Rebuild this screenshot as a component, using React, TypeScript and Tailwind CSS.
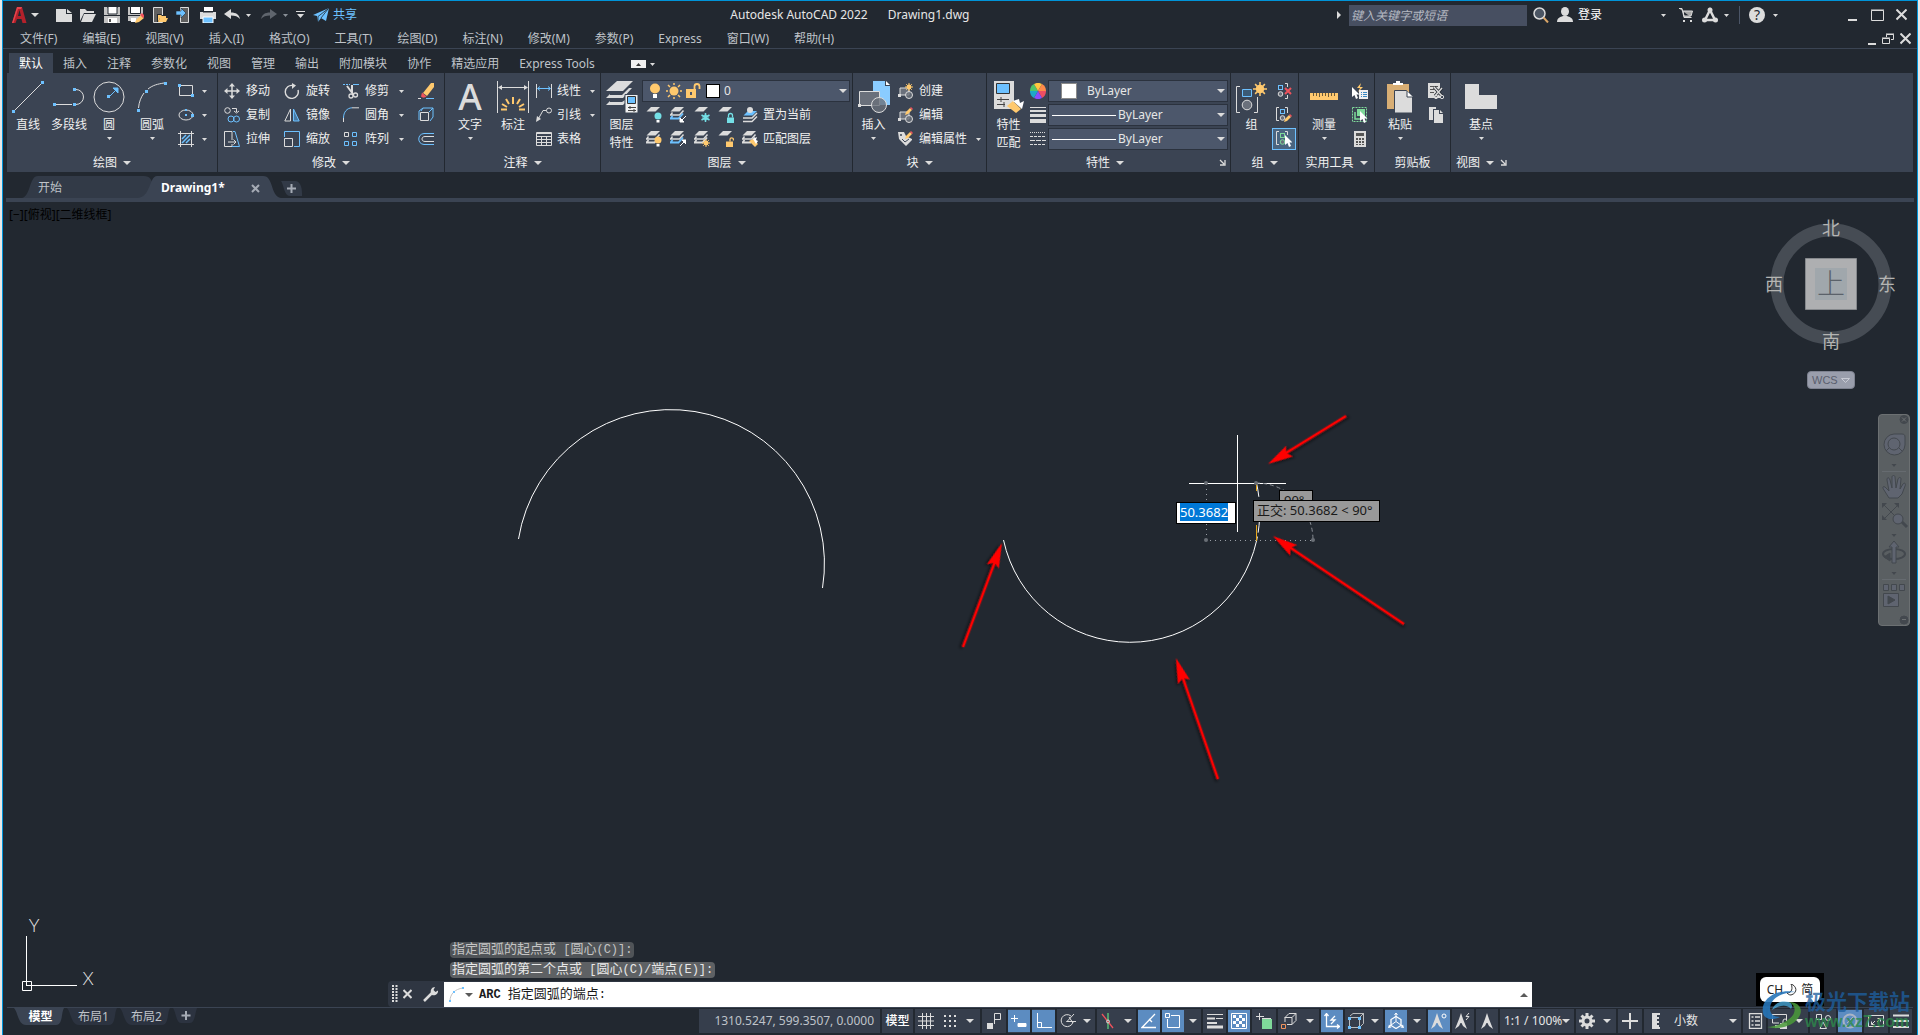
import { FC, ReactNode } from "react";

const W = "#dcdcdc";
const B = "#6dc1ff";
const Y = "#ffc96e";
const G = "#7fd99a";
const C = "#74dfe6";
const R = "#f0525c";

type IcoProps = { w?: number; h?: number; children: ReactNode };

const Ico: FC<IcoProps> = ({ w = 16, h = 16, children }) => (
  <svg
    width={w}
    height={h}
    viewBox={`0 0 ${w} ${h}`}
    fill="none"
    className="shrink-0"
    aria-hidden="true"
  >
    {children}
  </svg>
);

// small triangle used by every drop-down
const Arrow: FC<{ big?: boolean; color?: string }> = ({ big, color = W }) => (
  <svg
    width={big ? 8 : 5}
    height={big ? 4 : 3}
    viewBox="0 0 8 4"
    preserveAspectRatio="none"
    className="shrink-0"
    aria-hidden="true"
  >
    <path d="M0 0h8L4 4z" fill={color} />
  </svg>
);

/* ---------- shared icon parts ---------- */

const Sheet: FC<{ x?: number; y?: number; c?: string }> = ({ x = 0, y = 0, c = W }) => (
  <path d={`M${x + 5} ${y}h9l-4.500 4.500h-9z`} fill={c} />
);

const Sheets: FC<{ c?: string }> = ({ c = W }) => (
  <>
    <Sheet y={0} />
    <path d="M2.500 5.500L.5 8h9l4-4.500" stroke={W} strokeWidth="1.500" />
    <path d="M2.500 9L.5 11.500h8l4.500-5" stroke={c} strokeWidth="1.800" />
  </>
);

const Bulb: FC<{ c: string }> = ({ c }) => (
  <>
    <circle cx="12" cy="9" r="3.500" fill={c} />
    <path d="M10.500 13h3v2.500h-3z" fill="#fff" />
  </>
);

const Star: FC<{ x: number; y: number; r: number }> = ({ x, y, r }) => (
  <g stroke={Y} strokeWidth={r > 5 ? 1.5 : 1}>
    <circle cx={x} cy={y} r={r * 0.6} fill={Y} stroke="none" />
    <path
      d={`M${x} ${y - r}V${y + r}M${x - r} ${y}H${x + r}M${x - r * 0.7} ${y - r * 0.7}L${x + r * 0.7} ${y + r * 0.7}M${x + r * 0.7} ${y - r * 0.7}L${x - r * 0.7} ${y + r * 0.7}`}
    />
  </g>
);

const Pencil: FC<{ x: number; y: number }> = ({ x, y }) => (
  <g transform={`translate(${x} ${y})`}>
    <path d="M0 8l1-3 4-4 2 2-4 4z" fill={Y} />
    <path d="M5 1l1-1 2 2-1 1z" fill={R} />
  </g>
);

const Lock: FC<{ c: string; open?: boolean }> = ({ c, open }) => (
  <>
    <path d={open ? "M8 10.500h7V16H8z" : "M9 10.500h7V16H9z"} fill={c} />
    <path d={open ? "M12 10.500V8.500a1.700 1.700 0 0 1 3.400 0v1" : "M10.500 10.500V8.500a2 2 0 0 1 4 0v2"} stroke={c} strokeWidth="1.300" />
  </>
);

const Block: FC = () => (
  <>
    <path d="M2 5h9v7H2z" fill="#6a707b" stroke={W} />
    <circle cx="11" cy="12" r="3.500" fill="#6a707b" fillOpacity=".8" stroke={W} />
    <path d="M0 11h3v3H0z" fill={W} />
  </>
);

const Cursor: FC<{ x: number; y: number }> = ({ x, y }) => (
  <path d={`M${x} ${y}v10l2.500-2 1.500 4 2-1-1.500-3.500h3z`} fill="#fff" />
);

const GroupMark: FC<{ c?: string }> = ({ c = B }) => (
  <>
    <rect x="4.500" y="2.500" width="4" height="4" stroke={c} />
    <circle cx="6.500" cy="11" r="2.300" fill="#6a707b" stroke={c === B ? W : c} />
  </>
);

/* ---------- ribbon building blocks ---------- */

type BigProps = {
  width: string;
  lines: string[];
  icon: ReactNode;
  arrow?: boolean;
};

const Big: FC<BigProps> = ({ width, lines, icon, arrow }) => (
  <button className={`${width} h-18 flex flex-col items-center shrink-0`}>
    <span className="h-9 w-9 flex items-center justify-center">{icon}</span>
    {lines.map((line) => (
      <span key={line} className="leading-[17px] mt-px whitespace-nowrap">
        {line}
      </span>
    ))}
    {arrow && (
      <span className="mt-1">
        <Arrow />
      </span>
    )}
  </button>
);

type SmallProps = {
  label?: string;
  title?: string;
  icon: ReactNode;
  arrow?: boolean;
  gap?: string;
};

const Small: FC<SmallProps> = ({ label, title, icon, arrow, gap = "gap-1.5" }) => (
  <button aria-label={label || title} className={`h-6 flex items-center ${gap} whitespace-nowrap`}>
    {icon}
    {label && <span>{label}</span>}
    {arrow && (
      <span className={label ? "ml-1" : "ml-0.5"}>
        <Arrow />
      </span>
    )}
  </button>
);

type PanelProps = {
  width: string;
  title: string;
  noArrow?: boolean;
  launcher?: boolean;
  children: ReactNode;
};

const Launcher: FC = () => (
  <Ico w={7} h={7}>
    <path d="M1 1l4 4M6 1v5H1" stroke={W} strokeWidth="1.300" />
  </Ico>
);

const Panel: FC<PanelProps> = ({ width, title, noArrow, launcher, children }) => (
  <section className={`${width} shrink-0 pt-1.5 border-r border-[#222830] flex flex-col`}>
    <div className="h-18 flex">{children}</div>
    <div className="flex-1 pt-0.5 flex items-center px-1">
      <button className="flex-1 flex items-center justify-center gap-1.5">
        {title}
        {!noArrow && <Arrow big />}
      </button>
      {launcher && <Launcher />}
    </div>
  </section>
);

const Combo: FC<{ label: string; value: string; children?: ReactNode; box: string }> = ({
  label,
  value,
  children,
  box,
}) => (
  <div
    className={`${box} relative h-[22px] flex items-center bg-[#4c576b] border border-[#2b323e]`}
  >
    {children}
    <select
      aria-label={label}
      defaultValue={value}
      className="flex-1 min-w-0 h-full appearance-none bg-transparent outline-none text-[#e6e6e6]"
    >
      <option>{value}</option>
    </select>
    <span className="absolute right-0.5 top-2 flex pointer-events-none">
      <Arrow big />
    </span>
  </div>
);

/* ---------- title, menu and tab rows ---------- */

const menus = [
  "文件(F)", "编辑(E)", "视图(V)", "插入(I)", "格式(O)", "工具(T)", "绘图(D)",
  "标注(N)", "修改(M)", "参数(P)", "Express", "窗口(W)", "帮助(H)",
];

const tabs = [
  "默认", "插入", "注释", "参数化", "视图", "管理", "输出",
  "附加模块", "协作", "精选应用", "Express Tools",
];

const quickTools: { name: string; icon: ReactNode }[] = [
  {
    name: "新建",
    icon: <path d="M0 2h10v5h6v8H0zM11 2l5 4h-5z" fill={W} />,
  },
  {
    name: "打开",
    icon: (
      <>
        <path d="M0 14V2h5l2 2h7v2H4z" fill={W} />
        <path d="M4 7h12l-4 8H1z" fill={W} />
      </>
    ),
  },
  {
    name: "保存",
    icon: (
      <>
        <path d="M0 0h16v16H0z" fill="#c4c4c4" />
        <path d="M4 0h9v7H4z" fill="#fff" />
        <path d="M3 0h1v7h9V0h1M0 8.500h16" stroke="#222830" />
        <path d="M4 11h9v5H4z" fill="#fff" />
        <path d="M5 12h2v3H5z" fill="#555" />
      </>
    ),
  },
  {
    name: "另存为",
    icon: (
      <>
        <path d="M0 0h15v8l-6 6H0z" fill="#c4c4c4" />
        <path d="M3 0h9v6H3z" fill="#fff" />
        <path d="M2.500 0v6.500h10V0M0 8.500h12" stroke="#222830" />
        <path d="M3 11h5v4H3z" fill="#fff" />
        <path d="M7 16l1-3 5-5 3 3-5 4z" fill={Y} />
        <path d="M12 8l2-2 3 3-2 2z" fill={R} />
      </>
    ),
  },
  {
    name: "从 Web 打开",
    icon: (
      <>
        <path d="M1.500.5h9v15h-9z" fill="#606060" stroke={W} />
        <path d="M5 7h4l1 1h5v7H5z" fill="#222830" />
        <path d="M6 8h3l1 1h4v2H8l-2 4z" fill={Y} />
        <path d="M8 11h8l-2 4H6z" fill={Y} />
      </>
    ),
  },
  {
    name: "保存到 Web",
    icon: (
      <>
        <path d="M4.500.5h8v15h-8z" fill="#606060" stroke={W} />
        <path d="M0 4h5V1l5 5-5 5V8H0z" fill={B} stroke="#222830" strokeWidth=".6" />
      </>
    ),
  },
  {
    name: "打印",
    icon: (
      <>
        <path d="M4 0h9v4H4z" fill="#fff" />
        <path d="M0 5h16v7H0z" fill={W} />
        <path d="M3 5h10" stroke="#222830" />
        <path d="M3 10h10v6H3z" fill={B} stroke="#fff" />
      </>
    ),
  },
];

const TitleBar: FC = () => (
  <header className="h-7 flex items-center">
    <div className="w-[38%] flex items-center pl-2">
      <button aria-label="应用程序菜单" className="flex items-center gap-1 w-[45px]">
        <Ico w={16} h={18}>
          <path d="M1 17L6 1h5l4.500 16h-4L10.500 13H6L4.500 17z" fill="#b3212b" />
          <path d="M7 10l1.500-6 1.500 6z" fill="#222830" />
          <path d="M6 1h5l-1 2H7L2.500 17H1z" fill="#e5454d" />
        </Ico>
        <Arrow big />
      </button>
      <div className="flex gap-2">
        {quickTools.map((tool) => (
          <button key={tool.name} aria-label={tool.name}>
            <Ico>{tool.icon}</Ico>
          </button>
        ))}
      </div>
      <button aria-label="放弃" className="ml-2 flex items-center gap-1.5">
        <Ico>
          <path d="M0 7l7-5v3.500c5 0 8 2 9 6.500-2-2.500-5-3.500-9-3.500V12z" fill={W} />
        </Ico>
        <Arrow />
      </button>
      <button aria-label="重做" className="ml-2.5 flex items-center gap-1.5">
        <Ico>
          <path d="M16 7L9 2v3.500c-5 0-8 2-9 6.500 2-2.500 5-3.500 9-3.500V12z" fill="#5f656d" />
        </Ico>
        <Arrow color="#8a9098" />
      </button>
      <button aria-label="自定义快速访问工具栏" className="ml-2">
        <Ico w={9} h={8}>
          <path d="M0 .5h9" stroke={W} />
          <path d="M1 3h7L4.500 7z" fill={W} />
        </Ico>
      </button>
      <button className="ml-2 flex items-center gap-1 text-[#6dc1ff]">
        <Ico>
          <path d="M0 8L16 1l-3 13-5-3-3 4-1-6z" fill={B} />
          <path d="M16 1L5 9.500V15M8 11l7-9" stroke="#222830" strokeWidth=".8" />
        </Ico>
        共享
      </button>
    </div>
    <h1 className="flex-1 flex gap-5 text-[#e6e6e6] whitespace-nowrap">
      <span>Autodesk AutoCAD 2022</span>
      <span>Drawing1.dwg</span>
    </h1>
    <div className="flex items-center pr-2.5">
      <svg width="4" height="8" viewBox="0 0 4 8" aria-hidden="true">
        <path d="M0 0l4 4-4 4z" fill={W} />
      </svg>
      <input
        aria-label="搜索"
        placeholder="键入关键字或短语"
        className="ml-2 w-[178px] h-[21px] px-0.5 bg-[#474f61] italic outline-none placeholder:text-[#b5b9c1]"
      />
      <button aria-label="搜索" className="ml-1.5">
        <Ico>
          <circle cx="6.500" cy="6.500" r="5.500" fill="#4b5563" stroke={W} strokeWidth="1.500" />
          <path d="M10.500 10.500l4.500 5" stroke="#d9a567" strokeWidth="2" />
        </Ico>
      </button>
      <button className="ml-2 flex items-center gap-[5px] text-white">
        <Ico>
          <ellipse cx="8" cy="4.500" rx="4" ry="4.500" fill={W} />
          <path d="M0 15c0-4 3-5 6-6h4c3 1 6 2 6 6z" fill={W} />
        </Ico>
        登录
        <span className="ml-[54px]">
          <Arrow />
        </span>
      </button>
      <button aria-label="应用商店" className="ml-3">
        <Ico>
          <path d="M1 1.500h3l2 9h7.500M5 4h9.500L13 9H6z" fill="#a8a8a8" stroke={W} />
          <path d="M5 13h2v2H5zM12 13h2v2h-2z" fill={W} />
        </Ico>
      </button>
      <button aria-label="Autodesk 应用" className="ml-2 flex items-center gap-1.5">
        <Ico>
          <path d="M8 3L3 13h10z" stroke={W} strokeWidth="2.500" />
          <circle cx="8" cy="3" r="2.500" fill={W} />
          <circle cx="2.500" cy="13" r="2.500" fill={W} />
          <circle cx="13.500" cy="13" r="2.500" fill={W} />
        </Ico>
        <Arrow />
      </button>
      <span className="ml-2.5 h-[18px] border-l border-[#4b5567]" />
      <button aria-label="帮助" className="ml-[9px] flex items-center gap-2">
        <span className="size-4 rounded-full bg-[#dcdcdc] text-[#222830] text-sm leading-4 text-center">
          ?
        </span>
        <Arrow />
      </button>
      <button aria-label="最小化" className="ml-[70px]">
        <Ico w={9} h={12}>
          <path d="M0 11h9" stroke={W} strokeWidth="2" />
        </Ico>
      </button>
      <button aria-label="最大化" className="ml-3.5">
        <Ico w={13} h={12}>
          <path d="M.5 1.500h12v10H.5zM0 1h13" stroke={W} />
        </Ico>
      </button>
      <button aria-label="关闭" className="ml-3">
        <Ico w={11} h={12}>
          <path d="M.5.5l10 10M10.500.5l-10 10" stroke={W} strokeWidth="2" />
        </Ico>
      </button>
    </div>
  </header>
);

const MenuBar: FC = () => (
  <nav className="h-5 flex items-center gap-[25px] pl-[17px] pr-1.5 border-b border-[#3b4453] text-[#bfc3c9]">
    {menus.map((menu) => (
      <a key={menu} href="#" className="whitespace-nowrap">
        {menu}
      </a>
    ))}
    <span className="ml-auto flex items-center gap-1.5">
      <button aria-label="最小化图形">
        <Ico w={8} h={12}>
          <path d="M0 11h8" stroke={W} strokeWidth="2" />
        </Ico>
      </button>
      <button aria-label="还原图形">
        <Ico w={12} h={12}>
          <path d="M4.500 4V1.500h7v5H9M.5 5.500h7v5h-7zM4 1h8M0 5h8" stroke={W} />
        </Ico>
      </button>
      <button aria-label="关闭图形">
        <Ico w={11} h={12}>
          <path d="M.5.5l10 10M10.500.5l-10 10" stroke={W} strokeWidth="2" />
        </Ico>
      </button>
    </span>
  </nav>
);

const RibbonTabs: FC = () => (
  <nav className="h-6 flex items-end pl-1.5 text-[#bfc3c9]">
    {tabs.map((tab, i) => (
      <button
        key={tab}
        className={`h-5 pt-0.5 px-2.5 whitespace-nowrap ${i === 0 ? "bg-[#3b4453] text-white" : ""}`}
      >
        {tab}
      </button>
    ))}
    <button aria-label="最小化功能区" className="ml-[26px] h-5 pt-0.5 flex items-center gap-1">
      <Ico w={15} h={8}>
        <path d="M0 0h15v8H0z" fill="#f0f0f0" />
        <path d="M5 6h5L7.500 3z" fill="#333" />
      </Ico>
      <Arrow />
    </button>
  </nav>
);

/* ---------- ribbon panels ---------- */

const DrawPanel: FC = () => (
  <Panel width="w-[211px]" title="绘图">
    <Big
      width="w-[42px]"
      lines={["直线"]}
      icon={
        <Ico w={32} h={32}>
          <path d="M3 29L29 3" stroke={W} />
          <path d="M0 29h3v3H0zM29 0h3v3h-3z" fill={B} />
        </Ico>
      }
    />
    <Big
      width="w-10"
      lines={["多段线"]}
      icon={
        <Ico w={32} h={32}>
          <path d="M3 23.500h16M23 8.500a7 7 0 0 1 0 15" stroke={W} />
          <path d="M0 22h3v3H0zM20 22h3v3h-3zM20 7h3v3h-3z" fill={B} />
        </Ico>
      }
    />
    <Big
      width="w-10"
      lines={["圆"]}
      arrow
      icon={
        <Ico w={32} h={32}>
          <circle cx="16" cy="16" r="15" stroke={W} />
          <path d="M17 15l7-7M20 7h5v5z" stroke={B} fill={B} />
          <path d="M14 14h3v3h-3z" fill={B} />
        </Ico>
      }
    />
    <Big
      width="w-[46px]"
      lines={["圆弧"]}
      arrow
      icon={
        <Ico w={32} h={32}>
          <path d="M2.500 27C3 21 5 16 8 12M12 8c5-4 10-5 16-6" stroke={W} />
          <path d="M1 28h3v3H1zM9 9h3v3H9zM28 1h3v3h-3z" fill={B} />
        </Ico>
      }
    />
    <div className="ml-[3px]">
      <Small
        title="矩形"
        arrow
        icon={
          <Ico>
            <path d="M1.500 2.500h13v10h-13z" stroke={W} />
            <path d="M0 1h3v3H0zM13 11h3v3h-3z" fill={B} />
          </Ico>
        }
      />
      <Small
        title="椭圆"
        arrow
        icon={
          <Ico>
            <ellipse cx="8" cy="8" rx="7" ry="5" stroke={W} />
            <path d="M7 7h2v2H7zM7 2h2v2H7zM13 7h3v3h-3z" fill={B} />
          </Ico>
        }
      />
      <Small
        title="图案填充"
        arrow
        icon={
          <Ico>
            <path d="M0 2.500h16M0 13.500h16M2.500 0v16M13.500 0v16" stroke={W} />
            <path d="M4 8l4-4M4 12l8-8M8 12l4-4" stroke={B} strokeWidth="1.500" />
          </Ico>
        }
      />
    </div>
  </Panel>
);

const ModifyPanel: FC = () => (
  <Panel width="w-[227px]" title="修改">
    <div className="w-[60px] ml-1.5">
      <Small
        label="移动"
        icon={
          <Ico>
            <path d="M8 2v12M2 8h12" stroke={W} strokeWidth="1.500" />
            <path d="M8 0l3 3.500H5zM8 16l3-3.500H5zM0 8l3.500-3v6zM16 8l-3.500-3v6z" fill={W} />
          </Ico>
        }
      />
      <Small
        label="复制"
        icon={
          <Ico>
            <circle cx="3.500" cy="3.500" r="2.800" stroke={W} />
            <circle cx="7" cy="12" r="3" stroke={B} />
            <circle cx="12.500" cy="12" r="3" stroke={B} />
            <path d="M8 1.500h4.500V5M10 4l2.500 2L15 4" stroke={W} />
          </Ico>
        }
      />
      <Small
        label="拉伸"
        icon={
          <Ico>
            <path d="M8 9V.5H.5v15H8V13M4 11h8M9.500 8.500L12 11l-2.500 2.500" stroke={W} />
            <path d="M9 .5h2l4.500 15H8" stroke={B} />
          </Ico>
        }
      />
    </div>
    <div className="w-[59px]">
      <Small
        label="旋转"
        icon={
          <Ico>
            <path d="M9 2.500A6.500 6.500 0 1 0 14 7" stroke={W} strokeWidth="1.400" />
            <path d="M8 0l4 2.500L8 6z" fill={W} />
          </Ico>
        }
      />
      <Small
        label="镜像"
        icon={
          <Ico>
            <path d="M6.500 2v12H.8z" stroke={W} />
            <path d="M9.500 2v12h5.700z" stroke={B} fill="#4a7ba5" />
          </Ico>
        }
      />
      <Small
        label="缩放"
        icon={
          <Ico>
            <path d="M.5 6V.5h15v15H10" stroke={B} />
            <path d="M.5 7.500h8v8h-8z" stroke={W} />
          </Ico>
        }
      />
    </div>
    <div className="w-[75px]">
      <Small
        label="修剪"
        arrow
        icon={
          <Ico>
            <path d="M0 1.500h7" stroke={B} strokeDasharray="2 1" />
            <path d="M10 1.500h6" stroke={B} />
            <path d="M4 3l6 8M9 2v8" stroke={W} strokeWidth="2" />
            <circle cx="8" cy="13" r="2" stroke={W} strokeWidth="1.300" />
            <circle cx="12.500" cy="12" r="2" stroke={W} strokeWidth="1.300" />
          </Ico>
        }
      />
      <Small
        label="圆角"
        arrow
        icon={
          <Ico>
            <path d="M.5 15v-4" stroke={W} />
            <path d="M.5 11C.5 5 4 1 9 .8" stroke={B} />
            <path d="M9 .8h7" stroke={W} />
          </Ico>
        }
      />
      <Small
        label="阵列"
        arrow
        icon={
          <Ico>
            <path d="M1.500 1.500h4v4h-4z" stroke={W} />
            <path d="M9.500 1.500h4v4h-4zM1.500 10.500h4v4h-4zM9.500 10.500h4v4h-4z" stroke={B} />
          </Ico>
        }
      />
    </div>
    <div>
      <Small
        title="删除"
        icon={
          <Ico>
            <path d="M5 10L13 0h3v4L9 13z" fill={Y} />
            <path d="M4 9.500l4.500 4c-2 1.500-4 1.500-5.500 0z" fill={R} />
            <path d="M0 15.500h3" stroke={W} />
            <path d="M8 15.500h8" stroke={B} />
          </Ico>
        }
      />
      <Small
        title="分解"
        icon={
          <Ico>
            <path d="M2.500 5.500h8v8h-8z" stroke={W} />
            <path d="M1 4l4-3h10v9l-3 4M5 1L3 4M15 1l-4 4M1 4v9" stroke={B} />
          </Ico>
        }
      />
      <Small
        title="偏移"
        icon={
          <Ico>
            <path d="M16 2.500H6C-1 3-1 13 6 13.500h10" stroke={B} />
            <path d="M16 5.500H7c-4 0-4 5 0 5h9" stroke={W} />
          </Ico>
        }
      />
    </div>
  </Panel>
);

const AnnotatePanel: FC = () => (
  <Panel width="w-[156px]" title="注释">
    <Big
      width="w-[50px]"
      lines={["文字"]}
      arrow
      icon={<span className="text-4xl leading-9 font-medium text-[#dcdcdc]">A</span>}
    />
    <Big
      width="w-9"
      lines={["标注"]}
      icon={
        <Ico w={32} h={32}>
          <path d="M.5 0v32M31.500 0v32M2 6.500h28" stroke={W} />
          <path d="M1 6.500l4-2.500v5zM31 6.500L27 4v5z" fill={W} />
          <path d="M16 16v7M9 18l3 5M23 18l-3 5M5 23l5 3M27 23l-5 3M4 28.500h6M22 28.500h6" stroke={Y} strokeWidth="2" />
        </Ico>
      }
    />
    <div className="ml-[5px]">
      <Small
        label="线性"
        arrow
        gap="gap-[5px]"
        icon={
          <Ico>
            <path d="M.5 1v14M15.500 1v14" stroke={W} />
            <path d="M2 5.500h12M4 3.500l-2.500 2L4 7.500M12 3.500l2.500 2-2.500 2" stroke={B} />
          </Ico>
        }
      />
      <Small
        label="引线"
        arrow
        gap="gap-[5px]"
        icon={
          <Ico>
            <circle cx="13" cy="3.500" r="2.500" stroke={W} />
            <path d="M10.500 3.500H7l-5 9" stroke={W} />
            <path d="M0 15l1-6 4 3z" fill={W} />
          </Ico>
        }
      />
      <Small
        label="表格"
        gap="gap-[5px]"
        icon={
          <Ico>
            <path d="M.5 1.500h15v13H.5zM.5 2.500h15M.5 5.500h15M.5 8.500h15M.5 11.500h15M5.500 5v9M10.500 5v9" stroke={W} />
          </Ico>
        }
      />
    </div>
  </Panel>
);

const layerTools: { name: string; icon: ReactNode }[][] = [
  [
    { name: "关闭图层", icon: <><Sheet /><Bulb c={C} /></> },
    { name: "隔离图层", icon: <><Sheets c={B} /><path d="M16 9l-5 5M10 11v4h4z" stroke="#fff" fill="#fff" /></> },
    {
      name: "冻结图层",
      icon: (
        <>
          <Sheet />
          <path d="M11.500 6v9M7.500 8l8 5M15.500 8l-8 5" stroke={C} strokeWidth="1.500" />
          <circle cx="11.500" cy="10.500" r="2.500" stroke={C} />
        </>
      ),
    },
    { name: "锁定图层", icon: <><Sheet /><Lock c={C} /></> },
  ],
  [
    { name: "打开所有图层", icon: <><Sheets /><Bulb c={Y} /></> },
    { name: "取消隔离图层", icon: <><Sheets c={B} /><path d="M10 15l5-5M12 9h4v4z" stroke="#fff" fill="#fff" /></> },
    { name: "解冻所有图层", icon: <><Sheets /><Star x={12} y={12} r={4} /></> },
    { name: "解锁图层", icon: <><Sheet /><Lock c={Y} open /></> },
  ],
];

const LayerPanel: FC = () => (
  <Panel width="w-[252px]" title="图层">
    <Big
      width="w-[41px]"
      lines={["图层", "特性"]}
      icon={
        <Ico w={32} h={32}>
          <path d="M11 0h16L17 10H0z" fill={W} />
          <path d="M4 13L0 17h17l9-10h-3l-7 7H4z" fill={W} />
          <path d="M4 20l-4 4h17l2-2v-3l-3 2H4z" fill={W} />
          <path d="M19 13.500h13V32H19z" fill="#f0f0f0" stroke="#3b4453" />
          <path d="M21.500 15.500h8v7h-8z" fill={B} stroke="#333" />
          <path d="M22 26.500h8M22 29.500h8M24 25v3M28 28v3" stroke="#444" />
        </Ico>
      }
    />
    <div className="flex flex-col">
      <div className="h-6 flex items-center">
        <Combo label="图层" value="0" box="w-[208px]">
          <span className="flex gap-[3px] ml-1 mr-1 items-center">
            <Ico>
              <circle cx="8" cy="5.500" r="5" fill={Y} />
              <path d="M6 11h4v4H6z" fill="#fff" />
            </Ico>
            <Ico>
              <circle cx="8" cy="8" r="4.500" fill={Y} />
              <path
                d="M8 0v2M8 14v2M0 8h2M14 8h2M2 2l2 2M12 12l2 2M14 2l-2 2M4 12l-2 2"
                stroke={Y}
                strokeWidth="1.500"
              />
            </Ico>
            <Ico>
              <path d="M1 6h10v9H1z" fill={Y} />
              <path d="M9.500 6V3.500a2.500 2.500 0 0 1 5 0V6" stroke={Y} strokeWidth="1.800" />
              <path d="M5 9h2v3H5z" fill="#4c576b" />
            </Ico>
            <span className="size-3.5 ml-0.5 bg-white border border-black" />
          </span>
        </Combo>
      </div>
      {layerTools.map((row, i) => (
        <div key={i} className="h-6 flex gap-2 pl-1">
          {row.map((tool) => (
            <Small key={tool.name} title={tool.name} icon={<Ico>{tool.icon}</Ico>} />
          ))}
          <Small
            label={i === 0 ? "置为当前" : "匹配图层"}
            gap="gap-[5px]"
            icon={
              i === 0 ? (
                <Ico>
                  <Sheet x={1} y={4} c={B} />
                  <circle cx="8" cy="3" r="3" fill={W} />
                  <path d="M1 11h9l5-5M1 14.500h9l5-5" stroke={W} strokeWidth="1.500" />
                </Ico>
              ) : (
                <Ico>
                  <Sheets />
                  <path d="M7 10l4-2 5 5-3 3z" fill={Y} />
                  <path d="M11 8l4-2-1 3 2 1-2 3z" fill="#fff" />
                </Ico>
              )
            }
          />
        </div>
      ))}
    </div>
  </Panel>
);

const BlockPanel: FC = () => (
  <Panel width="w-[134px]" title="块">
    <Big
      width="w-[41px]"
      lines={["插入"]}
      arrow
      icon={
        <Ico w={32} h={32}>
          <path d="M15 0h12v5h5v19H15z" fill="#8accff" />
          <path d="M28 0l4 4h-4z" fill="#fff" />
          <path d="M1.500 10.500h20v14h-20z" fill="#6a707b" stroke={W} />
          <circle cx="21" cy="24" r="7.500" fill="#6a707b" fillOpacity=".8" stroke={W} />
          <path d="M0 23h3v3H0z" fill={W} />
        </Ico>
      }
    />
    <div className="ml-1">
      <Small label="创建" gap="gap-[5px]" icon={<Ico><Block /><Star x={11} y={4} r={4} /></Ico>} />
      <Small label="编辑" gap="gap-[5px]" icon={<Ico><Block /><Pencil x={7} y={0} /></Ico>} />
      <Small
        label="编辑属性"
        arrow
        gap="gap-[5px]"
        icon={
          <Ico>
            <path d="M0 1h6l2 4 6 3v1l-6 6-7-7z" fill={W} />
            <circle cx="3" cy="4" r="1" fill="#3b4453" />
            <path d="M4 8l3 3 4-3" stroke="#3b4453" />
            <Pencil x={7} y={0} />
          </Ico>
        }
      />
    </div>
  </Panel>
);

const PropertiesPanel: FC = () => (
  <Panel width="w-[244px]" title="特性" launcher>
    <Big
      width="w-[43px]"
      lines={["特性", "匹配"]}
      icon={
        <Ico w={32} h={32}>
          <path d="M1 0h20v28H1z" fill={W} />
          <path d="M3.500 2.500h13v10h-13z" fill={B} stroke="#333" />
          <path d="M4 18.500h12M4 23.500h8M8 16v5M11 21v5" stroke="#444" />
          <path d="M14 25l6-5 8 8-5 4z" fill={Y} />
          <path d="M20 20l6-2 1 4 4-2-2 8z" fill="#fff" />
        </Ico>
      }
    />
    <div className="w-[18px]">
      <Small
        title="对象颜色"
        icon={
          <Ico>
            <path d="M8 8L0 8A8 8 0 0 1 4 1z" fill="#4fc46a" />
            <path d="M8 8L4 1A8 8 0 0 1 12 1z" fill="#ffc640" />
            <path d="M8 8L12 1A8 8 0 0 1 16 8z" fill="#ff8b4a" />
            <path d="M8 8L16 8A8 8 0 0 1 12 15z" fill="#ee4e62" />
            <path d="M8 8L12 15A8 8 0 0 1 4 15z" fill="#8a4dff" />
            <path d="M8 8L4 15A8 8 0 0 1 0 8z" fill="#1ea7c9" />
          </Ico>
        }
      />
      <Small
        title="线宽"
        icon={
          <Ico>
            <path d="M0 .5h16" stroke={W} />
            <path d="M0 4h16" stroke={W} strokeWidth="2" />
            <path d="M0 8.500h16" stroke={W} strokeWidth="3" />
            <path d="M0 14h16" stroke={W} strokeWidth="4" />
          </Ico>
        }
      />
      <Small
        title="线型"
        icon={
          <Ico>
            <path d="M0 1.500h16" stroke={W} strokeDasharray="1 1" />
            <path d="M0 5.500h16M0 13.500h16" stroke={W} strokeDasharray="3 1" />
            <path d="M0 9.500h16" stroke={W} strokeDasharray="5 1" />
          </Ico>
        }
      />
    </div>
    <div className="flex-1 pr-0.5">
      <div className="h-6 flex items-center">
        <Combo label="对象颜色" value="ByLayer" box="flex-1">
          <span className="size-4 ml-3 mr-2.5 bg-white border border-[#8a8a8a]" />
        </Combo>
      </div>
      <div className="h-6 flex items-center">
        <Combo label="线宽" value="ByLayer" box="flex-1">
          <span className="w-16 ml-[3px] mr-0.5 border-t border-white" />
        </Combo>
      </div>
      <div className="h-6 flex items-center">
        <Combo label="线型" value="ByLayer" box="flex-1">
          <span className="w-16 ml-[3px] mr-0.5 border-t border-white" />
        </Combo>
      </div>
    </div>
  </Panel>
);

const GroupPanel: FC = () => (
  <Panel width="w-[68px]" title="组">
    <Big
      width="w-[41px]"
      lines={["组"]}
      icon={
        <Ico w={32} h={32}>
          <path d="M4 5.500H.5v26H4M18 31.500h3.500V16" stroke={W} />
          <path d="M6.500 8.500h9v7h-9z" fill="#3b5a75" stroke={B} />
          <circle cx="11" cy="24" r="4.800" fill="#6a707b" stroke={W} />
          <Star x={24} y={8} r={7} />
        </Ico>
      }
    />
    <div className="flex flex-col items-center w-6">
      <Small
        title="解除编组"
        icon={
          <Ico>
            <g transform="translate(-2 0)"><GroupMark /></g>
            <path d="M9 .5h2.500V4M11.500 12v3.500H9" stroke={W} />
            <path d="M9 5l6 6M15 5l-6 6" stroke={R} strokeWidth="2" />
          </Ico>
        }
      />
      <Small
        title="组编辑"
        icon={
          <Ico>
            <path d="M3 .5H.5v13H3M9 .5h2.500V6" stroke={W} />
            <GroupMark />
            <Pencil x={8} y={7} />
          </Ico>
        }
      />
      <button
        aria-label="启用组选择"
        className="w-6 h-[22px] mt-px flex items-center justify-center bg-[#4a6580] border border-[#6dc1ff]"
      >
        <Ico>
          <path d="M3 .5H.5v13H3M9 .5h2.500V4" stroke={W} />
          <GroupMark c={G} />
          <Cursor x={9} y={4} />
        </Ico>
      </button>
    </div>
  </Panel>
);

const UtilityPanels: FC = () => (
  <>
    <Panel width="w-[76px]" title="实用工具">
      <Big
        width="w-[50px]"
        lines={["测量"]}
        arrow
        icon={
          <Ico w={32} h={32}>
            <path d="M2 12h28v7H2z" fill={Y} />
            <path d="M5.500 12v3M8.500 12v3M11.500 12v4M14.500 12v3M17.500 12v3M20.500 12v4M23.500 12v3M26.500 12v3" stroke="#6b5a3a" />
          </Ico>
        }
      />
      <div className="ml-[3px]">
        <Small
          title="快速选择"
          icon={
            <Ico>
              <Cursor x={0} y={4} />
              <path d="M9 0L5 5h3L6 9l5-5H8z" fill={Y} />
              <path d="M7 7h9v9H7z" fill="#f0f0f0" />
              <path d="M9 9.500h1M11 9.500h4M9 11.500h1M11 11.500h4M9 13.500h1M11 13.500h4" stroke="#3a8ac4" />
            </Ico>
          }
        />
        <Small
          title="全部选择"
          icon={
            <Ico>
              <path d="M.5.5h14v14H.5z" stroke={G} strokeDasharray="2 1" />
              <path d="M5 2h8v7H5z" fill={G} />
              <path d="M3 5v7h6" stroke={G} strokeWidth="1.500" />
              <Cursor x={8} y={4} />
            </Ico>
          }
        />
        <Small
          title="快速计算器"
          icon={
            <Ico>
              <path d="M2 0h12v16H2z" fill={W} />
              <path d="M4 2h8v3H4zM4 7h2v2H4zM7 7h2v2H7zM10 7h2v2h-2zM4 10h2v2H4zM7 10h2v2H7zM10 10h2v2h-2zM4 13h2v1H4zM7 13h2v1H7zM10 13h2v1h-2z" fill="#555" />
            </Ico>
          }
        />
      </div>
    </Panel>
    <Panel width="w-[76px]" title="剪贴板" noArrow>
      <Big
        width="w-[50px]"
        lines={["粘贴"]}
        arrow
        icon={
          <Ico w={32} h={32}>
            <path d="M3 3h22v25H3z" fill="#d8ae74" />
            <path d="M9 4V2h3V0h4v2h3v2z" fill="#fff" />
            <path d="M10.500 9.500h12l6 6V32h-18z" fill={W} stroke="#3b4453" />
            <path d="M23 10v6h6" fill="#fff" stroke="#3b4453" />
          </Ico>
        }
      />
      <div className="ml-[3px]">
        <Small
          title="剪切"
          icon={
            <Ico>
              <path d="M0 0h12v15H0z" fill={W} />
              <path d="M2 3.500h8M2 6.500h4M2 9.500h4" stroke="#555" />
              <path d="M6 4l8 9M14 5l-7 8" stroke="#222830" strokeWidth="3" />
              <path d="M6 4l8 9M14 5l-7 8" stroke={W} strokeWidth="1.500" />
              <circle cx="8" cy="14" r="1.700" stroke={W} />
              <circle cx="14" cy="14" r="1.700" stroke={W} />
            </Ico>
          }
        />
        <Small
          title="复制"
          icon={
            <Ico>
              <path d="M1 0h7v2H5v11H1z" fill={W} />
              <path d="M6 3h5v4h4v9H6zM12 3l3 3h-3z" fill={W} />
            </Ico>
          }
        />
      </div>
    </Panel>
    <section className="flex-1 pt-1.5 flex flex-col">
      <Big
        width="w-[60px]"
        lines={["基点"]}
        arrow
        icon={
          <Ico w={32} h={32}>
            <path d="M0 3h14v11h18v14H0z" fill={W} />
          </Ico>
        }
      />
      <div className="flex-1 pt-0.5 flex items-center gap-1.5 pl-[5px]">
        <button className="flex items-center gap-1.5">
          视图
          <Arrow big />
        </button>
        <Launcher />
      </div>
    </section>
  </>
);

const Ribbon: FC = () => (
  <div className="h-[99px] mx-1 flex overflow-hidden bg-[#3b4453] text-[#f0f0f0]">
    <DrawPanel />
    <ModifyPanel />
    <AnnotatePanel />
    <LayerPanel />
    <BlockPanel />
    <PropertiesPanel />
    <GroupPanel />
    <UtilityPanels />
  </div>
);

const FileTabs: FC = () => (
  <>
    <div className="h-[26px] flex items-end pl-[19px] text-[#bfc3c9]">
      <button className="relative w-[131px] h-[22px] pt-0.5 pl-4 text-left">
        <svg className="absolute inset-0" width="131" height="22" aria-hidden="true">
          <path d="M0 22C9 20 7 0 16 0h106c6 0 8 4 9 10v12z" fill="#323a47" />
        </svg>
        <span className="relative">开始</span>
      </button>
      <div className="relative -ml-4 w-[144px] h-[22px] pt-0.5 pl-6 flex items-center">
        <svg className="absolute inset-0" width="144" height="22" aria-hidden="true">
          <path d="M0 22C14 22 12 0 20 0h106c11 0 7 20 18 22z" fill="#3b4453" />
        </svg>
        <button className="relative font-bold text-white">Drawing1*</button>
        <button aria-label="关闭" className="relative ml-[26px]">
          <Ico w={9} h={9}>
            <path d="M1 1l7 7M8 1L1 8" stroke="#a5abb5" strokeWidth="2" />
          </Ico>
        </button>
      </div>
      <button aria-label="新图形" className="relative mb-0.5">
        <Ico w={22} h={16}>
          <path d="M0 1h14c5 0 7 6 7 12v3H9C3 16 3 5 0 1z" fill="#323a47" />
          <path d="M10.500 4v9M6 8.500h9" stroke="#a5abb5" strokeWidth="2" />
        </Ico>
      </button>
    </div>
    <div className="h-1 mx-[3px] bg-[#3b4453]" />
  </>
);

/* ---------- drawing area ---------- */

// marker arrow: a straight tail and a barbed head that points at (x, y)
const Pointer: FC<{ x: number; y: number; fromX: number; fromY: number }> = ({
  x,
  y,
  fromX,
  fromY,
}) => {
  const length = Math.hypot(fromX - x, fromY - y);
  const angle = (Math.atan2(fromY - y, fromX - x) * 180) / Math.PI;

  return (
    <g transform={`translate(${x} ${y}) rotate(${angle})`} filter="url(#shade)">
      <path d={`M20 0H${length}`} stroke="#ff0000" strokeWidth="2.500" />
      <path d="M0 0L25 -6L21 0L25 6.500z" fill="#ff0000" />
    </g>
  );
};

const Geometry: FC = () => (
  <svg className="absolute inset-0 w-full h-full" fill="none" aria-hidden="true">
    <defs>
      <filter id="shade" x="-20%" y="-100%" width="140%" height="300%">
        <feDropShadow dx="2" dy="2" stdDeviation="1.500" floodColor="#000" floodOpacity=".6" />
      </filter>
    </defs>
    <g transform="translate(-3 -202)">
      <g stroke="#fff">
        <path d="M518.500 539A153 153 0 0 1 822.500 588" />
        <path d="M1003.500 540A129.500 129.500 0 0 0 1256.500 541" />
        <path d="M1256.500 483Q1263 512 1256.500 541" strokeDasharray="14 4" />
        <path d="M1237.500 435V532M1189 483.500H1286" />
      </g>
      <path d="M1256.500 484v7M1256.500 525v16" stroke="#e8a81c" />
      <path d="M1206.500 484v56.500H1313" stroke="#9a9fa6" strokeDasharray="1 4" />
      <path d="M1256 483A57 57 0 0 1 1313 540" stroke="#8a8f96" strokeDasharray="4 3" />
      <g fill="#6a6f76">
        <circle cx="1206" cy="483" r="2" />
        <circle cx="1256" cy="483" r="2" />
        <circle cx="1206" cy="540" r="2" />
        <circle cx="1313" cy="540" r="2" />
      </g>
      <Pointer x={1268} y={464} fromX={1346} fromY={416} />
      <Pointer x={1273} y={536} fromX={1404} fromY={624} />
      <Pointer x={1002} y={543} fromX={963} fromY={647} />
      <Pointer x={1176} y={658} fromX={1218} fromY={779} />
    </g>
  </svg>
);

const DynamicInput: FC = () => (
  <div className="leading-[18px] text-[13px] text-[#1a1a1a]">
    <div className="absolute left-[1276px] top-[288px] w-[34px] h-5 px-1 border border-black bg-[#999]">
      90°
    </div>
    <div className="absolute left-[1250px] top-[298px] w-[127px] h-[22px] px-[3px] border border-black bg-[#999] whitespace-nowrap">
      正交: 50.3682 &lt; 90°
    </div>
    <div className="absolute left-[1173px] top-[300px] w-[60px] h-[22px] px-[3px] border border-black bg-white">
      <span className="block w-fit bg-[#0078d7] text-white">50.3682</span>
    </div>
  </div>
);

const ViewCube: FC = () => (
  <div className="absolute top-3 right-6 flex flex-col items-center gap-[13px] w-[124px]">
    <svg width="140" height="144" viewBox="0 0 140 144" className="shrink-0">
      <circle cx="70" cy="70" r="54" stroke="#464c54" strokeWidth="13" fill="none" />
      <path d="M44.500 44.500h51v51h-51z" fill="#aeafb1" stroke="#85888c" />
      <path d="M54 54h32v32H54z" fill="#a0a7ac" />
      <g textAnchor="middle" fontFamily='"Noto Sans CJK SC", sans-serif'>
        <text x="70" y="80" fontSize="28" fontWeight="300" fill="#5b626a">上</text>
        <g fontSize="18" fill="#b4b4b2">
          <text x="70" y="21">北</text>
          <text x="70" y="134">南</text>
          <text x="13" y="77">西</text>
          <text x="126" y="77">东</text>
        </g>
      </g>
    </svg>
    <button className="w-12 h-[18px] px-1 flex items-center justify-between rounded bg-[#9a9eac] border border-[#7e8290] text-[11px] text-[#5a5e6e] font-[Liberation_Sans]">
      WCS
      <Ico w={9} h={5}>
        <path d="M.5.5h8l-4 4z" stroke="#c8cad4" />
      </Ico>
    </button>
  </div>
);

const NavBar: FC = () => (
  <div className="absolute top-[212px] right-[7px] rounded border border-[#6c7072] bg-[#5a5f62]">
    <svg width="30" height="210" viewBox="0 0 30 210" fill="none" stroke="#43484e">
      <circle cx="25" cy="4.500" r="4" fill="#43484e" />
      <path d="M23 2.500l4 4M27 2.500l-4 4" stroke="#6c7072" />
      <path d="M15 19h8c2 0 3 1 3 3v8A10.500 10.500 0 1 1 15 19z" fill="#5f6470" />
      <circle cx="15" cy="29" r="6" />
      <path d="M10 33l-3 3M20 33l3 3" />
      <path d="M12.500 49h5L15 52zM12.500 119h5l-2.500 3zM12.500 157h5l-2.500 3z" fill="#43484e" stroke="none" />
      <path d="M3 56.500h24M3 164.500h24" stroke="#666b70" />
      <path
        d="M10 83L5 75c-2-3-1-4 1-3l4 4-2-11c0-3 2-3 3 0l2 8V62c0-2 3-2 3 0l1 11 2-9c1-2 3-2 3 0l-1 10 3-5c2-2 3 0 2 2l-3 8-4 4z"
        fill="#5f6470"
      />
      <path d="M5 90l14 14M19 90L5 104" />
      <path d="M3 88h5l-5 5zM20 88h-5l5 5zM3 105h5l-5-5z" fill="#43484e" stroke="none" />
      <circle cx="19" cy="104" r="5" fill="#5f6470" />
      <path d="M23 107l5 5" strokeWidth="3" />
      <ellipse cx="15" cy="139" rx="11" ry="5" strokeWidth="2" />
      <path d="M13 148v-16h-3l5-6 5 6h-3v16z" fill="#5f6470" />
      <path d="M5 142l6-4v8z" fill="#43484e" />
      <path d="M4.500 169.500h5v6h-5zM12.500 169.500h5v6h-5zM20.500 169.500h5v6h-5zM4.500 178.500h15v13h-15z" fill="#5f6470" />
      <path d="M9 181l7 4-7 4z" fill="#43484e" />
      <circle cx="25" cy="205" r="4" fill="#43484e" />
      <path d="M23 204.500h4" stroke="#6c7072" />
    </svg>
  </div>
);

const UcsIcon: FC = () => (
  <svg className="absolute left-4 bottom-3" width="76" height="80" viewBox="0 0 76 80" fill="none">
    <path d="M7.500 21v45M7.500 70.500H58M7.500 65v6M3.500 66.500h9v9h-9z" stroke="#fff" />
    <g fill="#e6e6e6" fontSize="18" fontFamily="Lato, sans-serif" fontWeight="300" textAnchor="middle">
      <text x="15" y="17">Y</text>
      <text x="69" y="70">X</text>
    </g>
  </svg>
);

const Console: FC<{ text: string }> = ({ text }) => (
  <>
    {text.split(/([\x20-\x7e]+)/).map((part, i) =>
      i % 2 ? (
        <span key={i} className="text-xs whitespace-pre">
          {part}
        </span>
      ) : (
        part
      )
    )}
  </>
);

const CommandLine: FC = () => (
  <div className="absolute left-[385px] right-[385px] bottom-0 text-[13px] font-[Liberation_Mono,Noto_Sans_CJK_SC,monospace]">
    <div className="ml-[62px] mb-[3px] flex flex-col items-start gap-1 leading-4">
      <p className="px-0.5 rounded-sm bg-[#505458] text-[#c4c4c4]">
        <Console text="指定圆弧的起点或 [圆心(C)]:" />
      </p>
      <p className="px-0.5 rounded-sm bg-[#5e6164] text-[#e8e8e8]">
        <Console text="指定圆弧的第二个点或 [圆心(C)/端点(E)]:" />
      </p>
    </div>
    <div className="h-[26px] flex rounded-sm bg-[#2f3642]">
      <span className="flex items-center gap-[5px] w-14 pl-1">
        <Ico w={6} h={18}>
          <path d="M1 0v18M4.500 0v18" stroke={W} strokeWidth="2" strokeDasharray="2 1" />
        </Ico>
        <button aria-label="关闭命令行">
          <Ico w={9} h={10}>
            <path d="M.5 1l8 8M8.500 1l-8 8" stroke={W} strokeWidth="2" />
          </Ico>
        </button>
        <button aria-label="自定义" className="ml-1.5">
          <Ico>
            <path d="M1 15L9 7" stroke={W} strokeWidth="2.500" />
            <path d="M8 7C7 4 9 1 12 1L10.500 4l2 2L15 4.500C15.500 8 12 10 9 9z" fill={W} />
          </Ico>
        </button>
      </span>
      <div className="flex-1 mt-px flex items-center pl-[5px] pr-1 bg-white text-[#1a1a1a]">
        <Ico>
          <path d="M1 14C1 7 6 2 14 1" stroke="#c4c4c4" />
          <path d="M0 13h2v2H0zM4 4h2v2H4zM13 0h2v2h-2z" fill={B} />
        </Ico>
        <Arrow big color="#5a5a5a" />
        <label htmlFor="command" className="ml-1.5 whitespace-pre">
          <b className="text-xs">ARC </b>
          <Console text="指定圆弧的端点:" />
        </label>
        <input id="command" className="flex-1 min-w-0 h-full outline-none" />
        <svg width="8" height="4" viewBox="0 0 8 4" aria-hidden="true">
          <path d="M0 4h8L4 0z" fill="#5a5a5a" />
        </svg>
      </div>
    </div>
  </div>
);

const Canvas: FC = () => (
  <main className="relative flex-1 overflow-hidden">
    <p className="absolute left-1.5 top-1 leading-[18px] text-black">[−][俯视][二维线框]</p>
    <Geometry />
    <DynamicInput />
    <ViewCube />
    <NavBar />
    <UcsIcon />
    <CommandLine />
    <div className="absolute right-[93px] bottom-px w-[68px] h-[33px] p-1 bg-black">
      <div className="h-[25px] flex items-center justify-center gap-1 rounded-md bg-white text-[#222]">
        CH
        <Ico w={10} h={12}>
          <path d="M4 0c6 2 7 9 0 11-2 0-3-1-4-2 5 0 6-5 4-9z" stroke="#333" />
        </Ico>
        简
      </div>
    </div>
  </main>
);

/* ---------- status bar ---------- */

type Cell = {
  name: string;
  width: string;
  icon?: ReactNode;
  on?: boolean;
  arrow?: boolean;
};

const Annot: FC = () => <path d="M8 0l2 6 4 10-4-3-1.500-3h-1L6 13l-4 3L6 6z" fill={W} />;

const cells: Cell[] = [
  {
    name: "推断约束",
    width: "w-6",
    icon: (
      <>
        <path d="M8.500 .5h6v6h-6zM8.500 6v5" stroke={W} />
        <path d="M1 10h6v6H1z" fill={W} />
      </>
    ),
  },
  {
    name: "动态输入",
    width: "w-[22px]",
    on: true,
    icon: <path d="M3.500 2v7M0 5.500h7M7 10.500h8v3H7z" stroke="#fff" fill="#fff" />,
  },
  { name: "正交模式", width: "w-[23px]", on: true, icon: <path d="M1.500 0v14.500H16M1.500 9.500h4v5" stroke="#fff" /> },
  {
    name: "极轴追踪",
    width: "w-[38px]",
    arrow: true,
    icon: <path d="M11 3a6 6 0 1 0 2 6M6.500 9L14 1M6.500 8.500H16M9 4l4 6" stroke={W} />,
  },
  {
    name: "等轴测草图",
    width: "w-[39px]",
    arrow: true,
    icon: (
      <>
        <path d="M8 0v16" stroke="#5fd07c" strokeWidth="1.300" />
        <path d="M2 1l11 14" stroke={R} strokeWidth="1.300" />
        <circle cx="8" cy="8.500" r="1.500" stroke={W} />
      </>
    ),
  },
  {
    name: "对象捕捉追踪",
    width: "w-[22px]",
    on: true,
    icon: <path d="M14 1L1 14.500h14M8 6l3 3" stroke="#fff" strokeWidth="1.300" />,
  },
  {
    name: "二维对象捕捉",
    width: "w-[39px]",
    on: true,
    arrow: true,
    icon: <path d="M.5.500h4v4h-4zM6 2.500h8.500v12h-12V6" stroke="#fff" />,
  },
  {
    name: "线宽",
    width: "w-[23px]",
    icon: (
      <>
        <path d="M0 1.500h16M9 5.500h7" stroke={W} />
        <path d="M0 5.500h8M0 10h10" stroke={W} strokeWidth="2" />
        <path d="M0 14h16" stroke={W} strokeWidth="3" />
      </>
    ),
  },
  {
    name: "透明度",
    width: "w-[22px]",
    on: true,
    icon: (
      <>
        <path d="M.5.500h15v15H.5z" stroke="#fff" />
        <path d="M2 3.500h12M2 9.500h12" stroke="#fff" strokeWidth="3" strokeDasharray="3 3" />
        <path d="M5 6.500h9M5 12.500h9" stroke="#fff" strokeWidth="3" strokeDasharray="3 3" />
      </>
    ),
  },
  {
    name: "选择循环",
    width: "w-6",
    icon: (
      <>
        <path d="M6 6h10v10H6z" fill={G} />
        <path d="M3.500 0v7M0 3.500h8M6 5.500h9" stroke={W} />
      </>
    ),
  },
  {
    name: "三维对象捕捉",
    width: "w-[41px]",
    arrow: true,
    icon: (
      <>
        <path d="M4 4.500h7v7H6M4 4v5M4 4.500l4-4h7v7l-4 4M11 4.500l4-4" stroke={W} />
        <path d="M.5 11.500h4v4h-4z" stroke="#f0925c" />
      </>
    ),
  },
  {
    name: "动态 UCS",
    width: "w-[22px]",
    on: true,
    icon: <path d="M2.500 1v12.500H15M.5 3l2-2.500 2 2.500M13 11.500l2.500 2L13 15.500M11 3L7 7h4l-4 4" stroke="#fff" strokeWidth="1.300" />,
  },
  {
    name: "选择过滤",
    width: "w-[38px]",
    arrow: true,
    icon: (
      <>
        <path d="M3 4.500h8M11.500 6v7M2 3l3-2.500h10.500v10l-3 3M12 4l3.500-3.500M1.500 6v7M3 14.500h7" stroke={W} strokeOpacity=".8" />
        <path d="M0 4h3v3H0zM0 13h3v3H0zM10 13h3v3h-3zM10 4h3v3h-3z" fill={B} />
      </>
    ),
  },
  {
    name: "小控件",
    width: "w-[41px]",
    on: true,
    arrow: true,
    icon: (
      <>
        <path d="M8 0v8M8 8.500l-7 5M8 8.500l7 5M6.500 2L8 0l1.500 2" stroke="#fff" />
        <path d="M8 3.500l5 3v6l-5 3-5-3v-6z" stroke="#fff" strokeWidth="1.300" />
        <path d="M0 15l1-3.500 2.500 3zM16 15l-1-3.500-2.500 3z" fill="#fff" />
      </>
    ),
  },
  { name: "注释可见性", width: "w-[22px]", on: true, icon: <><g transform="translate(-2 0)"><Annot /></g><circle cx="13" cy="3" r="2" stroke="#fff" /></> },
  { name: "自动缩放", width: "w-[22px]", icon: <><g transform="translate(-2 0)"><Annot /></g><path d="M14 0l-3 3.500h3L11 7" stroke={W} /></> },
  { name: "注释比例", width: "w-[22px]", icon: <Annot /> },
];

const endCells: Cell[] = [
  { name: "快捷特性", width: "w-[23px]", icon: <path d="M2.500.500h12v15h-12zM4.500 4h2M8 4h5M4.500 8h2M8 8h5M4.500 12h2M8 12h5" stroke={W} strokeWidth="1.300" /> },
  {
    name: "锁定用户界面",
    width: "w-10",
    arrow: true,
    icon: <><path d="M1.500 1.500h14v6M1.500 1v9H8" stroke={W} /><path d="M4 12h5v3H4zM9 10h7v6H9z" fill={W} /><path d="M12 10V8a2 2 0 0 1 4 0" stroke={W} /></>,
  },
  {
    name: "隔离对象",
    width: "w-[26px]",
    icon: <><path d="M1.500 1.500h5v5h-5zM5 15.500L8 9l3.500 6.500z" stroke={W} /><circle cx="13" cy="5" r="2.500" stroke={W} /></>,
  },
  {
    name: "图形性能",
    width: "w-6",
    on: true,
    icon: <><circle cx="8" cy="8" r="6.500" stroke="#a9b4c4" strokeWidth="2" /><path d="M5 10l6-6M6 12l6-6" stroke="#a9b4c4" /></>,
  },
  {
    name: "全屏显示",
    width: "w-6",
    icon: <path d="M.5 2.500h15v11H.5zM9.500 5.500h3v3M12 6l-3 3M6.500 11.500h-3v-3M4 11l3-3" stroke={W} />,
  },
  { name: "自定义", width: "w-[22px]", icon: <path d="M0 2.500h16M0 8h16M0 14h16" stroke={W} strokeWidth="2" /> },
];

const StatusCell: FC<{ cell: Cell }> = ({ cell }) => (
  <div className={`${cell.width} h-6 flex items-center bg-[#363e4c] shrink-0`}>
    <button
      aria-label={cell.name}
      className={`h-[22px] flex items-center justify-center ${cell.arrow ? "w-[22px]" : "w-full"} ${
        cell.on ? "bg-[#5c8cc1]" : ""
      }`}
    >
      <Ico>{cell.icon}</Ico>
    </button>
    {cell.arrow && (
      <button aria-label={`${cell.name}选项`} className="flex-1 flex justify-center">
        <Arrow big />
      </button>
    )}
  </div>
);

const LayoutTab: FC<{ label: string; active?: boolean }> = ({ label, active }) => (
  <button
    className={`relative h-[18px] w-[53px] leading-[18px] ${
      active ? "font-bold text-white" : "text-[#bfc3c9]"
    }`}
  >
    <svg className="absolute inset-0" width="53" height="18" aria-hidden="true">
      <path d="M0 0h50c-3 5-1 17-8 17H12C4 17 4 4 0 0z" fill={active ? "#3b4453" : "#2c3340"} />
    </svg>
    <span className="relative">{label}</span>
  </button>
);

const StatusBar: FC = () => (
  <footer className="h-7 mx-1 flex border-t border-[#3b4453] text-[#e6e6e6]">
    <div className="flex items-start pl-[7px]">
      <LayoutTab label="模型" active />
      <LayoutTab label="布局1" />
      <LayoutTab label="布局2" />
      <button aria-label="新建布局">
        <Ico w={26} h={16}>
          <path d="M0 0h24c-2 5-2 15-7 15H8C3 15 3 4 0 0z" fill="#2c3340" />
          <path d="M13 3v9M8.500 7.500h9" stroke="#a5abb5" strokeWidth="2" />
        </Ico>
      </button>
    </div>
    <div className="ml-auto flex gap-0.5 pt-px pr-px whitespace-nowrap">
      <span className="w-[181px] h-6 pr-1.5 leading-6 text-right bg-[#363e4c] text-[#bfc3c9]">
        1310.5247, 599.3507, 0.0000
      </span>
      <button className="w-[31px] h-6 bg-[#363e4c] font-medium text-white">模型</button>
      <div className="w-[65px] h-6 pl-[3px] flex items-center gap-2 bg-[#363e4c]">
        <button aria-label="栅格">
          <Ico>
            <path d="M4.500 0v16M8.500 0v16M12.500 0v16M0 3.500h16M0 8h16M0 12.500h16" stroke={W} />
          </Ico>
        </button>
        <button aria-label="捕捉模式">
          <Ico>
            <path d="M2 3h12M2 8h12M2 13h12" stroke={W} strokeWidth="2" strokeDasharray="2 3" />
          </Ico>
        </button>
        <button aria-label="捕捉选项">
          <Arrow big />
        </button>
      </div>
      {cells.map((cell) => (
        <StatusCell key={cell.name} cell={cell} />
      ))}
      <button className="w-[74px] h-6 pl-1 pr-1 flex items-center justify-between bg-[#363e4c]">
        1:1 / 100%
        <Arrow big />
      </button>
      <StatusCell
        cell={{
          name: "切换工作空间",
          width: "w-10",
          arrow: true,
          icon: (
            <>
              <circle cx="8" cy="8" r="4" stroke={W} strokeWidth="3" />
              <path d="M8 0v3M8 13v3M0 8h3M13 8h3M2.500 2.500l2 2M11.500 11.500l2 2M13.500 2.500l-2 2M4.500 11.500l-2 2" stroke={W} strokeWidth="3" />
            </>
          ),
        }}
      />
      <StatusCell
        cell={{ name: "注释监视器", width: "w-6", icon: <path d="M8 0v16M0 8h16" stroke={W} strokeWidth="2" /> }}
      />
      <button className="w-[97px] h-6 pl-1 pr-1 flex items-center bg-[#363e4c]">
        <Ico>
          <path d="M4 0h8v2H9v2h2v2H9v2h2v2H9v2h2v2h1v2H4z" fill={W} />
        </Ico>
        <span className="ml-2.5 mr-auto">小数</span>
        <Arrow big />
      </button>
      {endCells.map((cell) => (
        <StatusCell key={cell.name} cell={cell} />
      ))}
    </div>
  </footer>
);

const Watermark: FC = () => (
  <div className="absolute right-[7px] bottom-1 flex items-end gap-0.5 pointer-events-none">
    <svg width="42" height="42" viewBox="0 0 42 42" fill="none" aria-hidden="true">
      <path d="M2 24C-1 10 16-1 35 3 20 3 9 10 9 20c0 5 4 8 10 8C11 32 3 30 2 24z" fill="#2674b8" fillOpacity=".9" />
      <path d="M11 21c2-7 9-10 17-8 3 1 4 4 2 7-2-4-11-5-19 1z" fill="#4aa8d8" fillOpacity=".8" />
      <path d="M28 13c9 0 14 6 11 13-4 9-18 16-33 12 12-1 22-6 26-12 3-5 2-10-4-13z" fill="#4a9a3a" fillOpacity=".85" />
    </svg>
    <div className="font-bold">
      <p className="text-[21px] leading-6 text-[#1e5f9f]/80">极光下载站</p>
      <p className="text-base leading-[18px] text-[#2c8a4a]/80 font-[Liberation_Sans]">www.xz7.com</p>
    </div>
  </div>
);

const App: FC = () => {
  return (
    <div className="min-h-screen flex bg-[#e8e8e8] px-0.5 text-xs font-[Noto_Sans,Noto_Sans_CJK_SC,sans-serif]">
      <div className="relative flex-1 min-w-0 flex flex-col border border-b-0 border-[#0094d9] bg-[#222830]">
        <TitleBar />
        <MenuBar />
        <RibbonTabs />
        <Ribbon />
        <FileTabs />
        <Canvas />
        <StatusBar />
        <Watermark />
      </div>
    </div>
  );
};

export default App;
